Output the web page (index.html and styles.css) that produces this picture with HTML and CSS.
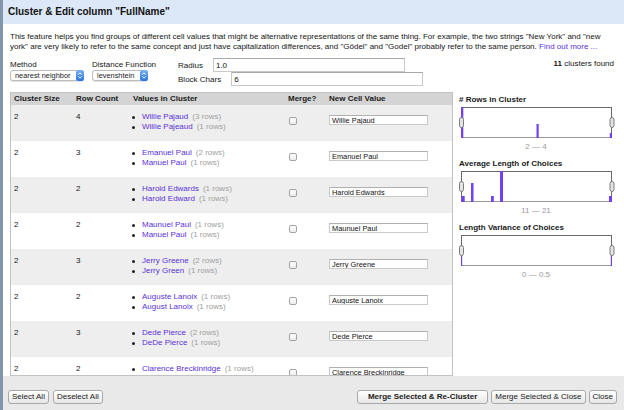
FILE: index.html
```html
<!DOCTYPE html>
<html>
<head>
<meta charset="utf-8">
<link rel="stylesheet" href="styles.css">
</head>
<body>
<div class="dialog">
  <div class="titlebar">Cluster &amp; Edit column "FullName"</div>
  <div class="body">
    <p class="desc">This feature helps you find groups of different cell values that might be alternative representations of the same thing. For example, the two strings "New York" and "new<br>york" are very likely to refer to the same concept and just have capitalization differences, and "Gödel" and "Godel" probably refer to the same person. <a class="link" href="#">Find out more ...</a></p>
    <div class="controls">
      <div class="ctl">
        <div class="lbl">Method</div>
        <div class="select sel-method"><span class="sel-text">nearest neighbor</span><span class="stepper"><svg width="8" height="11" viewBox="0 0 8 11"><defs><linearGradient id="g1" x1="0" y1="0" x2="0" y2="1"><stop offset="0" stop-color="#76b4f8"/><stop offset="1" stop-color="#2a72e2"/></linearGradient></defs><rect x="0" y="0" width="8" height="11" rx="2.5" fill="url(#g1)"/><polyline points="2.3,4.6 4,2.8 5.7,4.6" fill="none" stroke="#fff" stroke-width="1"/><polyline points="2.3,6.4 4,8.2 5.7,6.4" fill="none" stroke="#fff" stroke-width="1"/></svg></span></div>
      </div>
      <div class="ctl ctl-dist">
        <div class="lbl">Distance Function</div>
        <div class="select sel-dist"><span class="sel-text">levenshtein</span><span class="stepper"><svg width="8" height="11" viewBox="0 0 8 11"><defs><linearGradient id="g2" x1="0" y1="0" x2="0" y2="1"><stop offset="0" stop-color="#76b4f8"/><stop offset="1" stop-color="#2a72e2"/></linearGradient></defs><rect x="0" y="0" width="8" height="11" rx="2.5" fill="url(#g2)"/><polyline points="2.3,4.6 4,2.8 5.7,4.6" fill="none" stroke="#fff" stroke-width="1"/><polyline points="2.3,6.4 4,8.2 5.7,6.4" fill="none" stroke="#fff" stroke-width="1"/></svg></span></div>
      </div>
      <div class="params">
        <div class="prow"><span class="plbl">Radius</span><input class="field" type="text" value="1.0"></div>
        <div class="prow"><span class="plbl">Block Chars</span><input class="field" type="text" value="6"></div>
      </div>
      <div class="found"><b>11</b> clusters found</div>
    </div>
    <div class="main">
      <div class="tablepanel">
        <div class="thead">
          <div class="th">Cluster Size</div>
          <div class="th">Row Count</div>
          <div class="th">Values in Cluster</div>
          <div class="th">Merge?</div>
          <div class="th">New Cell Value</div>
        </div>
        <div class="tbody">
          <div class="row">
            <div class="num">2</div><div class="num">4</div>
            <div class="vals"><div class="item"><span class="dot"></span><a class="link" href="#">Willie Pajaud</a><span class="cnt">(3 rows)</span></div><div class="item"><span class="dot"></span><a class="link" href="#">Willie Pajeaud</a><span class="cnt">(1 rows)</span></div></div>
            <div class="mcell"><input class="chk" type="checkbox"></div>
            <div class="ncell"><input class="nv" type="text" value="Willie Pajaud"></div>
          </div>
          <div class="row">
            <div class="num">2</div><div class="num">3</div>
            <div class="vals"><div class="item"><span class="dot"></span><a class="link" href="#">Emanuel Paul</a><span class="cnt">(2 rows)</span></div><div class="item"><span class="dot"></span><a class="link" href="#">Manuel Paul</a><span class="cnt">(1 rows)</span></div></div>
            <div class="mcell"><input class="chk" type="checkbox"></div>
            <div class="ncell"><input class="nv" type="text" value="Emanuel Paul"></div>
          </div>
          <div class="row">
            <div class="num">2</div><div class="num">2</div>
            <div class="vals"><div class="item"><span class="dot"></span><a class="link" href="#">Harold Edwards</a><span class="cnt">(1 rows)</span></div><div class="item"><span class="dot"></span><a class="link" href="#">Harold Edward</a><span class="cnt">(1 rows)</span></div></div>
            <div class="mcell"><input class="chk" type="checkbox"></div>
            <div class="ncell"><input class="nv" type="text" value="Harold Edwards"></div>
          </div>
          <div class="row">
            <div class="num">2</div><div class="num">2</div>
            <div class="vals"><div class="item"><span class="dot"></span><a class="link" href="#">Maunuel Paul</a><span class="cnt">(1 rows)</span></div><div class="item"><span class="dot"></span><a class="link" href="#">Manuel Paul</a><span class="cnt">(1 rows)</span></div></div>
            <div class="mcell"><input class="chk" type="checkbox"></div>
            <div class="ncell"><input class="nv" type="text" value="Maunuel Paul"></div>
          </div>
          <div class="row">
            <div class="num">2</div><div class="num">3</div>
            <div class="vals"><div class="item"><span class="dot"></span><a class="link" href="#">Jerry Greene</a><span class="cnt">(2 rows)</span></div><div class="item"><span class="dot"></span><a class="link" href="#">Jerry Green</a><span class="cnt">(1 rows)</span></div></div>
            <div class="mcell"><input class="chk" type="checkbox"></div>
            <div class="ncell"><input class="nv" type="text" value="Jerry Greene"></div>
          </div>
          <div class="row">
            <div class="num">2</div><div class="num">2</div>
            <div class="vals"><div class="item"><span class="dot"></span><a class="link" href="#">Auguste Lanoix</a><span class="cnt">(1 rows)</span></div><div class="item"><span class="dot"></span><a class="link" href="#">August Lanoix</a><span class="cnt">(1 rows)</span></div></div>
            <div class="mcell"><input class="chk" type="checkbox"></div>
            <div class="ncell"><input class="nv" type="text" value="Auguste Lanoix"></div>
          </div>
          <div class="row">
            <div class="num">2</div><div class="num">3</div>
            <div class="vals"><div class="item"><span class="dot"></span><a class="link" href="#">Dede Pierce</a><span class="cnt">(2 rows)</span></div><div class="item"><span class="dot"></span><a class="link" href="#">DeDe Pierce</a><span class="cnt">(1 rows)</span></div></div>
            <div class="mcell"><input class="chk" type="checkbox"></div>
            <div class="ncell"><input class="nv" type="text" value="Dede Pierce"></div>
          </div>
          <div class="row">
            <div class="num">2</div><div class="num">2</div>
            <div class="vals"><div class="item"><span class="dot"></span><a class="link" href="#">Clarence Breckinridge</a><span class="cnt">(1 rows)</span></div><div class="item"><span class="dot"></span><a class="link" href="#">Clarence Breckenridge</a><span class="cnt">(1 rows)</span></div></div>
            <div class="mcell"><input class="chk" type="checkbox"></div>
            <div class="ncell"><input class="nv" type="text" value="Clarence Breckinridge"></div>
          </div>
        </div>
      </div>
      <div class="charts">
        <div class="chart">
          <div class="ctitle"># Rows in Cluster</div>
          <svg class="hist" width="160" height="32" viewBox="0 0 160 32">
            <rect x="5.5" y="0.5" width="150" height="30" fill="#fff" stroke="#6a6a6a"/>
            <line x1="5" y1="30.5" x2="156" y2="30.5" stroke="#9a9a9a"/>
            <rect class="bar" x="5" y="0" width="2.3" height="31"/>
            <rect class="bar" x="80.5" y="17" width="2.2" height="14"/>
            <rect class="bar" x="153.8" y="26" width="2.2" height="5"/>
            <rect class="handle" x="3.5" y="10.5" width="4" height="10" rx="2"/>
            <rect class="handle" x="154" y="10.5" width="4" height="10" rx="2"/>
          </svg>
          <div class="range">2 — 4</div>
        </div>
        <div class="chart">
          <div class="ctitle">Average Length of Choices</div>
          <svg class="hist" width="160" height="32" viewBox="0 0 160 32">
            <rect x="5.5" y="0.5" width="150" height="30" fill="#fff" stroke="#6a6a6a"/>
            <line x1="5" y1="30.5" x2="156" y2="30.5" stroke="#9a9a9a"/>
            <rect class="bar" x="5.5" y="25" width="3.2" height="6"/>
            <rect class="bar" x="15" y="12" width="2.5" height="19"/>
            <rect class="bar" x="35" y="25" width="2.8" height="6"/>
            <rect class="bar" x="44" y="0" width="3" height="31"/>
            <rect class="bar" x="153" y="25" width="3" height="6"/>
            <rect class="handle" x="3.5" y="10.5" width="4" height="10" rx="2"/>
            <rect class="handle" x="154" y="10.5" width="4" height="10" rx="2"/>
          </svg>
          <div class="range">11 — 21</div>
        </div>
        <div class="chart">
          <div class="ctitle">Length Variance of Choices</div>
          <svg class="hist" width="160" height="32" viewBox="0 0 160 32">
            <rect x="5.5" y="0.5" width="150" height="30" fill="#fff" stroke="#6a6a6a"/>
            <line x1="5" y1="30.5" x2="156" y2="30.5" stroke="#9a9a9a"/>
            <rect class="bar" x="5" y="20" width="1.2" height="11"/>
            <rect class="bar" x="154.8" y="20" width="1.2" height="11"/>
            <rect class="handle" x="3.5" y="10.5" width="4" height="10" rx="2"/>
            <rect class="handle" x="154" y="10.5" width="4" height="10" rx="2"/>
          </svg>
          <div class="range">0 — 0.5</div>
        </div>
      </div>
    </div>
  </div>
  <div class="footer">
    <button class="btn">Select All</button>
    <button class="btn">Deselect All</button>
    <div class="spacer"></div>
    <button class="btn btn-main">Merge Selected &amp; Re-Cluster</button>
    <button class="btn">Merge Selected &amp; Close</button>
    <button class="btn">Close</button>
  </div>
</div>
</body>
</html>
```
FILE: styles.css
```css
html, body {
  margin: 0;
  padding: 0;
}
body {
  width: 624px;
  height: 410px;
  overflow: hidden;
  font-family: "Liberation Sans", Arial, Helvetica, sans-serif;
  font-size: 8px;
  color: #151515;
  background: #fff;
}
.dialog {
  height: 410px;
  box-sizing: border-box;
  border-left: 3px solid #8395aa;
  display: flex;
  flex-direction: column;
}
.titlebar {
  flex: none;
  height: 24px;
  line-height: 24px;
  padding-left: 5px;
  background: #dce7f8;
  font-size: 10px;
  font-weight: bold;
  color: #111;
}
.body {
  flex: 1;
  min-height: 0;
  padding: 8px 0 0 7px;
  display: flex;
  flex-direction: column;
  background: #fff;
}
.desc {
  margin: 0;
  line-height: 10px;
  white-space: nowrap;
}
.link {
  color: #5a31d8;
  text-decoration: none;
}
.controls {
  display: flex;
  height: 28px;
  margin-top: 6px;
}
.ctl {
  padding-top: 2px;
}
.ctl-dist {
  margin-left: 8px;
}
.lbl {
  line-height: 10px;
}
.select {
  height: 11px;
  box-sizing: border-box;
  border: 1px solid #bcbcbc;
  border-radius: 3px;
  background: #fff;
  box-shadow: 0 1px 1px rgba(0,0,0,0.12);
  display: flex;
  align-items: center;
  padding-left: 4px;
  font-size: 7.4px;
  line-height: 9px;
  color: #222;
}
.sel-method { width: 74px; }
.sel-dist { width: 56px; }
.sel-text { flex: 1; white-space: nowrap; }
.stepper {
  display: block;
  width: 8px;
  height: 11px;
  margin-right: -1px;
}
.stepper svg { display: block; }
.params {
  margin-left: 22px;
  display: flex;
  flex-direction: column;
}
.prow {
  height: 14px;
  display: flex;
  align-items: center;
  gap: 10px;
}
.field {
  width: 192px;
  height: 14px;
  box-sizing: border-box;
  margin: 0;
  border: 1px solid #c8c8c8;
  border-top-color: #a8a8a8;
  padding: 0 2px;
  font-family: "Liberation Sans", Arial, sans-serif;
  font-size: 8px;
  color: #111;
  background: #fff;
  outline: none;
}
.found {
  margin-left: auto;
  padding-right: 10px;
  padding-top: 1px;
  line-height: 10px;
}
.main {
  flex: 1;
  min-height: 0;
  margin-top: 6px;
  display: flex;
}
.tablepanel {
  flex: none;
  width: 443px;
  box-sizing: border-box;
  border: 1px solid #c2c2c2;
  overflow: hidden;
  display: flex;
  flex-direction: column;
}
.thead, .row {
  display: grid;
  grid-template-columns: 62px 57px 155px 41px 1fr;
}
.thead {
  flex: none;
  height: 12px;
  line-height: 12px;
  background: #d4d4d4;
  font-weight: bold;
  color: #1a1a1a;
}
.th {
  padding-left: 3px;
  white-space: nowrap;
}
.tbody {
  flex: 1;
  min-height: 0;
  overflow: hidden;
}
.row {
  height: 36px;
  background: #fff;
}
.row:nth-child(odd) {
  background: #eeeeee;
}
.num {
  padding: 7px 0 0 3px;
  line-height: 10px;
}
.vals {
  padding: 7px 0 0 2px;
  line-height: 10px;
}
.item {
  display: flex;
  align-items: center;
  white-space: nowrap;
}
.dot {
  width: 3px;
  height: 3px;
  border-radius: 50%;
  background: #222;
  margin-right: 7px;
}
.cnt {
  color: #a0a0a0;
  margin-left: 4px;
}
.mcell {
  padding: 12px 0 0 4px;
}
.chk {
  -webkit-appearance: none;
  appearance: none;
  display: block;
  margin: 0;
  width: 8px;
  height: 8px;
  box-sizing: border-box;
  border: 1px solid #a3a3a3;
  border-radius: 2px;
  background: linear-gradient(#ffffff, #ececec);
}
.ncell {
  padding: 10px 0 0 3px;
}
.nv {
  display: block;
  width: 99px;
  height: 10px;
  box-sizing: border-box;
  margin: 0;
  border: 1px solid #c9c9c9;
  border-top-color: #b0b0b0;
  padding: 0 2px;
  font-family: "Liberation Sans", Arial, sans-serif;
  font-size: 7.4px;
  color: #111;
  background: #fff;
  outline: none;
}
.charts {
  flex: 1;
  padding-top: 3px;
  background: #fff;
}
.chart {
  margin-bottom: 7px;
}
.ctitle {
  padding-left: 6px;
  line-height: 10px;
  font-weight: bold;
  color: #1a1a1a;
  margin-bottom: 2px;
}
.hist {
  display: block;
  margin-left: 3px;
  overflow: visible;
}
.bar { fill: #7041f6; }
.handle {
  fill: #e4e4e4;
  stroke: #7d7d7d;
  stroke-width: 1;
}
.range {
  margin-top: 3px;
  width: 160px;
  margin-left: 3px;
  text-align: center;
  line-height: 10px;
  color: #9a9a9a;
}
.footer {
  flex: none;
  height: 34px;
  box-sizing: border-box;
  padding: 14px 7px 0 5px;
  background: #e9e9e9;
  display: flex;
  align-items: flex-start;
  gap: 3px;
}
.btn {
  height: 14px;
  box-sizing: border-box;
  margin: 0;
  padding: 0 3px;
  border: 1px solid #a9a9a9;
  border-radius: 3px;
  background: linear-gradient(#ffffff, #e6e6e6);
  font-family: "Liberation Sans", Arial, sans-serif;
  font-size: 8px;
  line-height: 12px;
  color: #1a1a1a;
  white-space: nowrap;
}
.btn + .btn {
  margin-left: 1px;
}
.spacer {
  flex: 1;
}
.btn-main {
  font-weight: bold;
  padding: 0 10px;
}
.spacer + .btn, .btn-main + .btn, .btn-main + .btn + .btn {
  margin-left: 0;
}
```
